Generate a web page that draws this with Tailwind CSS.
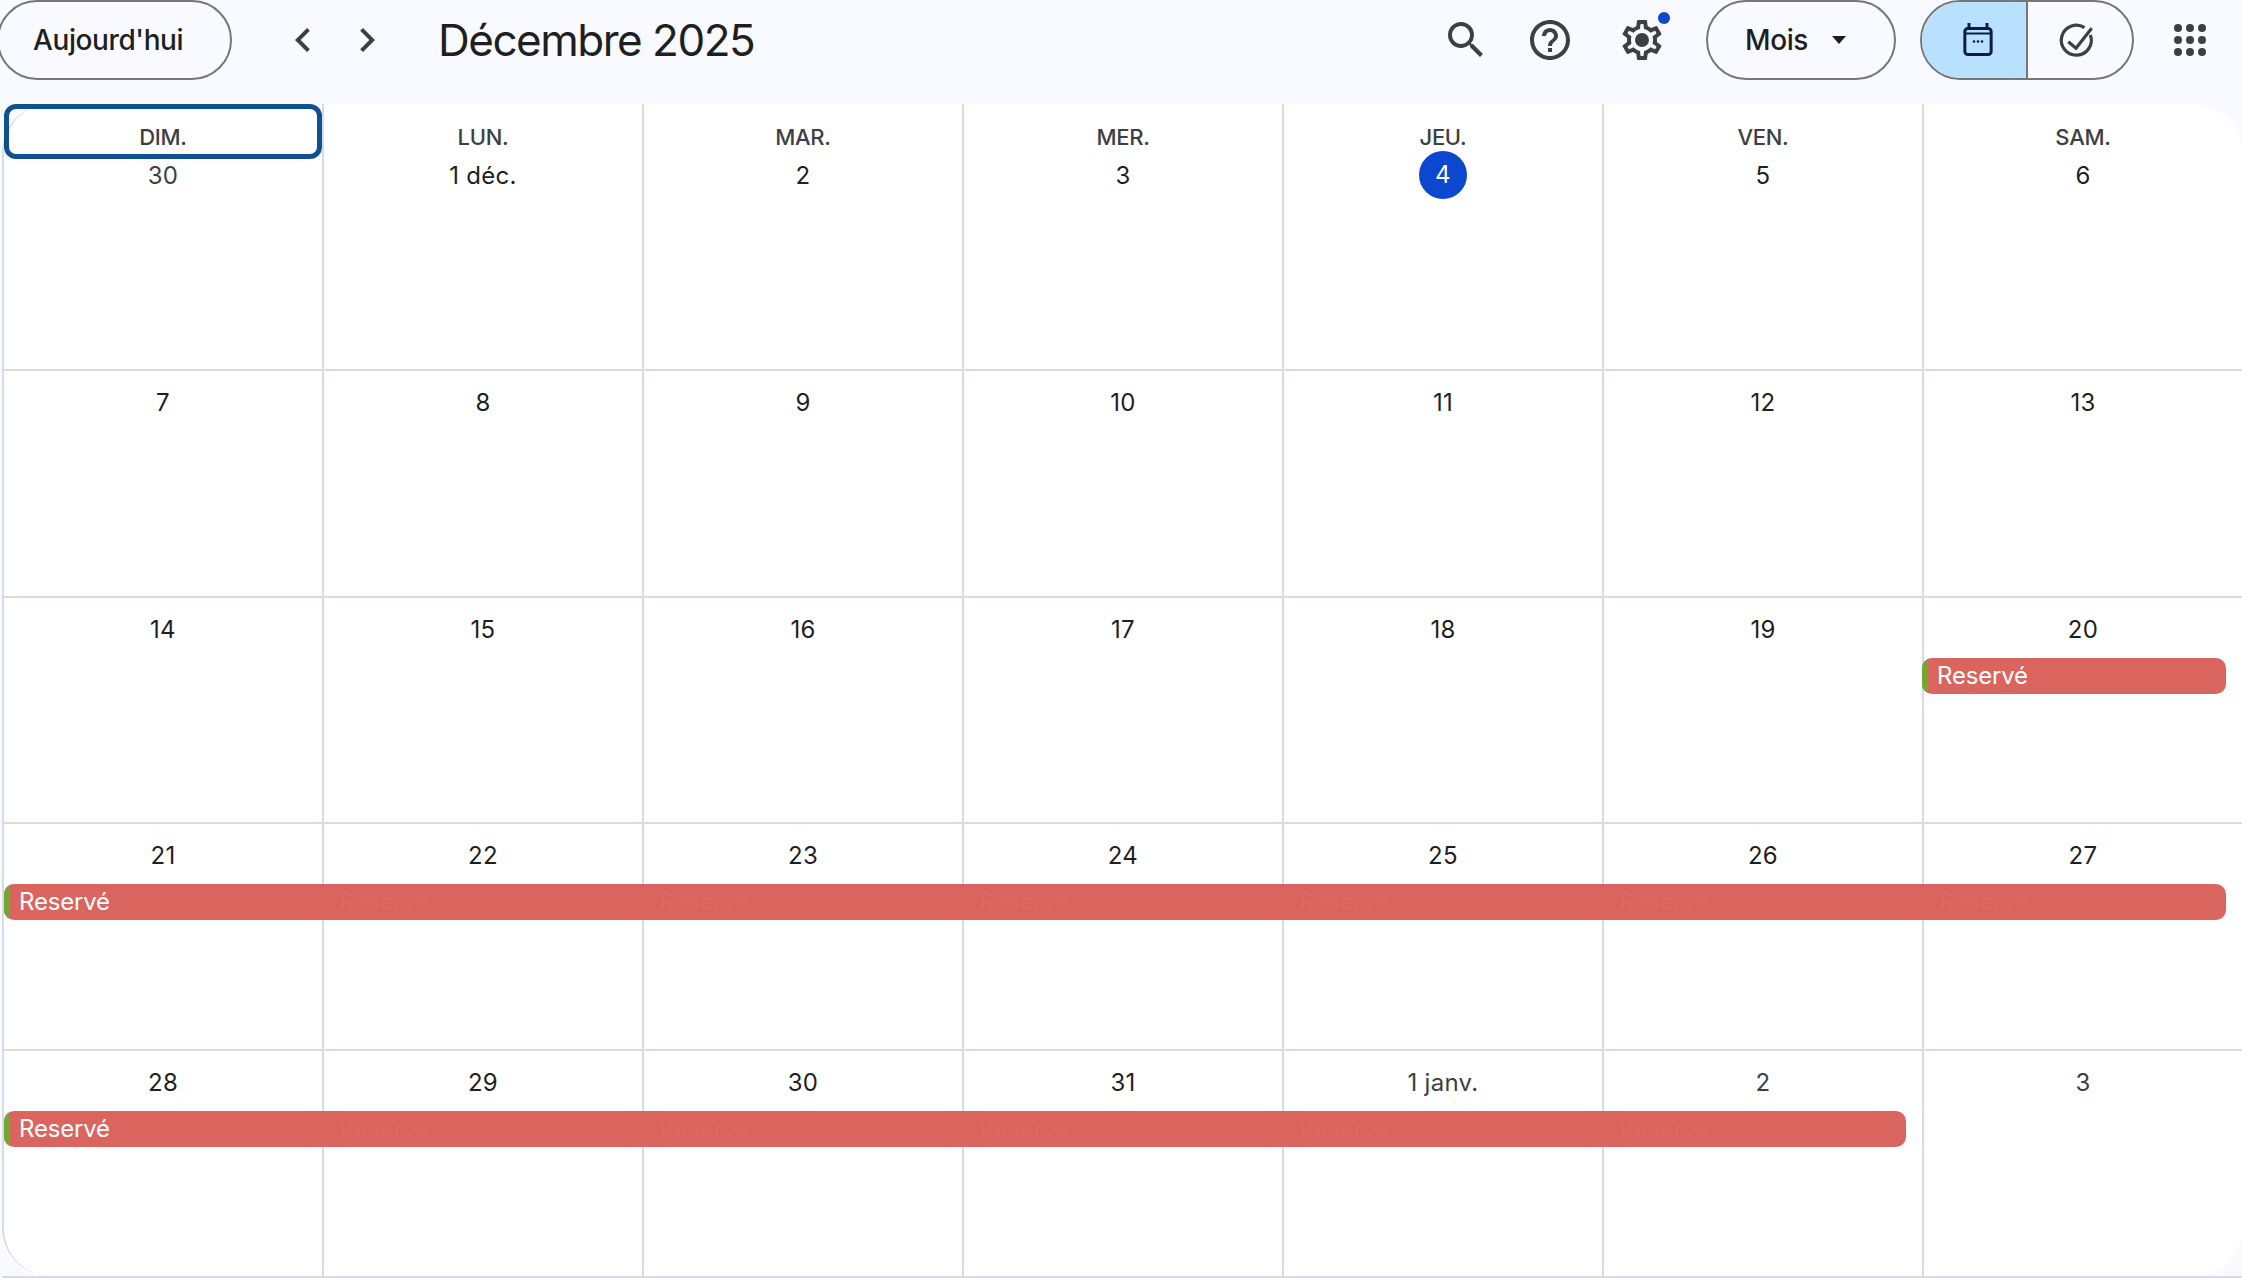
<!doctype html>
<html lang="fr">

<head>
    <meta charset="UTF-8">
    <title>Décembre 2025</title>
    <script src="https://cdn.jsdelivr.net/npm/@tailwindcss/browser@4"></script>
</head>

<body class="w-[2242px] h-[1278px] overflow-hidden bg-[#f8faff] font-['Inter',sans-serif] text-[#1f1f1f]">
    <!-- top bar -->
    <header class="h-[104px] flex items-start">
        <button class="w-[235px] h-20 -ml-[3px] pl-[34px] text-left rounded-full border-2 border-[#747775] text-[28px] font-medium tracking-[-0.4px] text-[#1f1f1f]">Aujourd'hui</button>
        <div class="flex ml-[39px] h-20 items-center text-[#3c4043]">
            <div class="w-16 flex justify-center">
                <svg width="48" height="48" viewBox="0 0 24 24" fill="currentColor"><path d="M15.41 7.41 14 6l-6 6 6 6 1.41-1.41L10.83 12z"/></svg>
            </div>
            <div class="w-16 flex justify-center">
                <svg width="48" height="48" viewBox="0 0 24 24" fill="currentColor"><path d="M10 6 8.59 7.41 13.17 12l-4.58 4.59L10 18l6-6z"/></svg>
            </div>
        </div>
        <h1 class="ml-[39px] h-20 leading-20 text-[44px] font-normal tracking-[-1.5px]">Décembre 2025</h1>

        <div class="ml-auto flex items-center h-20 text-[#3c4043]">
            <svg width="48" height="48" viewBox="0 0 24 24" fill="currentColor"><path d="M15.5 14h-.79l-.28-.27A6.471 6.471 0 0 0 16 9.5 6.5 6.5 0 1 0 9.5 16c1.61 0 3.09-.59 4.23-1.57l.27.28v.79l5 4.99L20.49 19l-4.99-5zm-6 0C7.01 14 5 11.99 5 9.5S7.01 5 9.5 5 14 7.01 14 9.5 11.99 14 9.5 14z"/></svg>
            <svg class="ml-[36px]" width="48" height="48" viewBox="0 0 24 24" fill="currentColor"><path d="M11 18h2v-2h-2v2zm1-16C6.48 2 2 6.48 2 12s4.48 10 10 10 10-4.48 10-10S17.52 2 12 2zm0 18c-4.41 0-8-3.59-8-8s3.59-8 8-8 8 3.59 8 8-3.59 8-8 8zm0-14c-2.21 0-4 1.79-4 4h2c0-1.1.9-2 2-2s2 .9 2 2c0 2-3 1.75-3 5h2c0-2.25 3-2.5 3-5 0-2.21-1.79-4-4-4z"/></svg>
            <div class="relative ml-[44px] w-12 h-12">
                <svg width="48" height="48" viewBox="0 0 24 24" fill="currentColor"><path d="M19.43 12.98c.04-.32.07-.64.07-.98 0-.34-.03-.66-.07-.98l2.11-1.65c.19-.15.24-.42.12-.64l-2-3.46c-.09-.16-.26-.25-.44-.25-.06 0-.12.01-.17.03l-2.49 1c-.52-.4-1.08-.73-1.69-.98l-.38-2.65C14.46 2.18 14.25 2 14 2h-4c-.25 0-.46.18-.49.42l-.38 2.65c-.61.25-1.17.59-1.69.98l-2.49-1c-.06-.02-.12-.03-.18-.03-.17 0-.34.09-.43.25l-2 3.46c-.13.22-.07.49.12.64l2.11 1.65c-.04.32-.07.65-.07.98 0 .33.03.66.07.98l-2.11 1.65c-.19.15-.24.42-.12.64l2 3.46c.09.16.26.25.44.25.06 0 .12-.01.17-.03l2.49-1c.52.4 1.08.73 1.69.98l.38 2.65c.03.24.24.42.49.42h4c.25 0 .46-.18.49-.42l.38-2.65c.61-.25 1.17-.59 1.69-.98l2.49 1c.06.02.12.03.18.03.17 0 .34-.09.43-.25l2-3.46c.12-.22.07-.49-.12-.64l-2.11-1.65zm-1.98-1.71c.04.31.05.52.05.73 0 .21-.02.43-.05.73l-.14 1.13.89.7 1.08.84-.7 1.21-1.27-.51-1.04-.42-.9.68c-.43.32-.84.56-1.25.73l-1.06.43-.16 1.13-.2 1.35h-1.4l-.19-1.35-.16-1.13-1.06-.43c-.43-.18-.83-.41-1.23-.71l-.91-.7-1.06.43-1.27.51-.7-1.21 1.08-.84.89-.7-.14-1.13c-.03-.31-.05-.54-.05-.74s.02-.43.05-.73l.14-1.13-.89-.7-1.08-.84.7-1.21 1.27.51 1.04.42.9-.68c.43-.32.84-.56 1.25-.73l1.06-.43.16-1.13.2-1.35h1.39l.19 1.35.16 1.13 1.06.43c.43.18.83.41 1.23.71l.91.7 1.06-.43 1.27-.51.7 1.21-1.07.85-.89.7.14 1.13z"/><circle cx="12" cy="12" r="3.5"/></svg>
                <span class="absolute top-[-4px] right-[-4px] w-3 h-3 rounded-full bg-[#0b47cf]"></span>
            </div>
            <button class="ml-[40px] w-[190px] h-20 rounded-full border-2 border-[#747775] flex items-center pl-[37px] text-[28px] font-medium tracking-[-0.4px] text-[#1f1f1f]">
                Mois
                <span class="ml-[24px] w-0 h-0 border-x-[7px] border-x-transparent border-t-[8px] border-t-[#1f1f1f]"></span>
            </button>
            <div class="ml-[24px] w-[214px] h-20 rounded-full border-2 border-[#747775] flex overflow-hidden">
                <div class="w-[104px] pl-[7px] bg-[#b9e1ff] flex items-center justify-center text-[#041e49]">
                    <svg width="34" height="38" viewBox="0 0 34 38" fill="none" stroke="currentColor" stroke-width="3">
                        <rect x="3.85" y="7.5" width="26.3" height="26" rx="3"/>
                        <path d="M3.85 12.5H30.15" stroke-width="2"/>
                        <path d="M8 2V7M26 2V7"/>
                        <circle cx="13" cy="20.5" r="1.3" fill="currentColor" stroke="none"/>
                        <circle cx="17" cy="20.5" r="1.3" fill="currentColor" stroke="none"/>
                        <circle cx="21" cy="20.5" r="1.3" fill="currentColor" stroke="none"/>
                    </svg>
                </div>
                <div class="flex-1 pr-2 border-l-2 border-[#747775] flex items-center justify-center">
                    <svg width="38" height="38" viewBox="0 0 38 38" fill="none" stroke="#3c4043" stroke-width="3.2">
                        <path d="M33.4 14A15 15 0 1 1 27.5 6.6"/>
                        <path d="M11.3 20.7L19 27.3L34.7 7.3"/>
                    </svg>
                </div>
            </div>
            <div class="ml-[32px] mr-[28px] w-12 h-12 grid grid-cols-3 place-items-center p-[6px]">
                <span class="w-2 h-2 rounded-full bg-[#3c4043]"></span><span class="w-2 h-2 rounded-full bg-[#3c4043]"></span><span class="w-2 h-2 rounded-full bg-[#3c4043]"></span>
                <span class="w-2 h-2 rounded-full bg-[#3c4043]"></span><span class="w-2 h-2 rounded-full bg-[#3c4043]"></span><span class="w-2 h-2 rounded-full bg-[#3c4043]"></span>
                <span class="w-2 h-2 rounded-full bg-[#3c4043]"></span><span class="w-2 h-2 rounded-full bg-[#3c4043]"></span><span class="w-2 h-2 rounded-full bg-[#3c4043]"></span>
            </div>
        </div>
    </header>

    <!-- month grid -->
    <main class="ml-[2px] h-[1174px] bg-white rounded-[48px] text-[24px] tracking-[0.3px] flex flex-col">

        <!-- week 1 with the weekday names -->
        <div class="relative h-[267px] grid grid-cols-[repeat(6,320px)_1fr] border-b-2 border-[#d5dbe8]">
            <div class="relative border-l-2 border-[#d5dbe8] rounded-tl-[48px] text-center pt-[21px]">
                <div class="absolute top-0 left-0 w-[318px] h-[55px] rounded-[12px] border-[5px] border-[#0f5190]"></div>
                <div class="h-6 leading-6 text-[22px] font-medium tracking-[-0.3px] text-[#3c4043]">DIM.</div>
                <div class="mt-[10px] h-8 leading-[34px] text-[#3c4043]">30</div>
            </div>
            <div class="border-l-2 border-[#d5dbe8] text-center pt-[21px]">
                <div class="h-6 leading-6 text-[22px] font-medium tracking-[-0.3px] text-[#3c4043]">LUN.</div>
                <div class="mt-[10px] h-8 leading-[34px]">1 déc.</div>
            </div>
            <div class="border-l-2 border-[#d5dbe8] text-center pt-[21px]">
                <div class="h-6 leading-6 text-[22px] font-medium tracking-[-0.3px] text-[#3c4043]">MAR.</div>
                <div class="mt-[10px] h-8 leading-[34px]">2</div>
            </div>
            <div class="border-l-2 border-[#d5dbe8] text-center pt-[21px]">
                <div class="h-6 leading-6 text-[22px] font-medium tracking-[-0.3px] text-[#3c4043]">MER.</div>
                <div class="mt-[10px] h-8 leading-[34px]">3</div>
            </div>
            <div class="border-l-2 border-[#d5dbe8] text-center pt-[21px]">
                <div class="h-6 leading-6 text-[22px] font-medium tracking-[-0.3px] text-[#3c4043]">JEU.</div>
                <div class="mt-[10px] h-8 flex items-center justify-center">
                    <span class="shrink-0 w-12 h-12 rounded-full bg-[#0b47cf] text-white flex items-center justify-center">4</span>
                </div>
            </div>
            <div class="border-l-2 border-[#d5dbe8] text-center pt-[21px]">
                <div class="h-6 leading-6 text-[22px] font-medium tracking-[-0.3px] text-[#3c4043]">VEN.</div>
                <div class="mt-[10px] h-8 leading-[34px]">5</div>
            </div>
            <div class="border-l-2 border-[#d5dbe8] text-center pt-[21px]">
                <div class="h-6 leading-6 text-[22px] font-medium tracking-[-0.3px] text-[#3c4043]">SAM.</div>
                <div class="mt-[10px] h-8 leading-[34px]">6</div>
            </div>
        </div>

        <!-- week 2 -->
        <div class="relative h-[227px] grid grid-cols-[repeat(6,320px)_1fr] border-b-2 border-[#d5dbe8] text-center leading-8">
            <div class="border-l-2 border-[#d5dbe8] pt-4">7</div>
            <div class="border-l-2 border-[#d5dbe8] pt-4">8</div>
            <div class="border-l-2 border-[#d5dbe8] pt-4">9</div>
            <div class="border-l-2 border-[#d5dbe8] pt-4">10</div>
            <div class="border-l-2 border-[#d5dbe8] pt-4">11</div>
            <div class="border-l-2 border-[#d5dbe8] pt-4">12</div>
            <div class="border-l-2 border-[#d5dbe8] pt-4">13</div>
        </div>

        <!-- week 3 -->
        <div class="relative h-[226px] grid grid-cols-[repeat(6,320px)_1fr] border-b-2 border-[#d5dbe8] text-center leading-8">
            <div class="border-l-2 border-[#d5dbe8] pt-4">14</div>
            <div class="border-l-2 border-[#d5dbe8] pt-4">15</div>
            <div class="border-l-2 border-[#d5dbe8] pt-4">16</div>
            <div class="border-l-2 border-[#d5dbe8] pt-4">17</div>
            <div class="border-l-2 border-[#d5dbe8] pt-4">18</div>
            <div class="border-l-2 border-[#d5dbe8] pt-4">19</div>
            <div class="border-l-2 border-[#d5dbe8] pt-4">20</div>
            <div class="absolute top-[60px] left-[1920px] w-[304px] h-9 pl-[15px] rounded-[10px] overflow-hidden bg-[#da655f] text-left text-white leading-9 tracking-[-0.2px]">
                <span class="absolute inset-y-0 left-0 w-[6px] bg-[#6faa2e]"></span>Reservé
            </div>
        </div>

        <!-- week 4 -->
        <div class="relative h-[227px] grid grid-cols-[repeat(6,320px)_1fr] border-b-2 border-[#d5dbe8] text-center leading-8">
            <div class="border-l-2 border-[#d5dbe8] pt-4">21</div>
            <div class="border-l-2 border-[#d5dbe8] pt-4">22</div>
            <div class="border-l-2 border-[#d5dbe8] pt-4">23</div>
            <div class="border-l-2 border-[#d5dbe8] pt-4">24</div>
            <div class="border-l-2 border-[#d5dbe8] pt-4">25</div>
            <div class="border-l-2 border-[#d5dbe8] pt-4">26</div>
            <div class="border-l-2 border-[#d5dbe8] pt-4">27</div>
            <div class="absolute top-[60px] left-[2px] w-[2222px] h-9 rounded-[10px] overflow-hidden bg-[#da655f] grid grid-cols-[repeat(7,320px)] text-left text-[#dc6a64] leading-9 tracking-[-0.2px]">
                <span class="absolute inset-y-0 left-0 w-[6px] bg-[#6faa2e]"></span>
                <span class="pl-[15px] text-white">Reservé</span>
                <span class="pl-[15px]">Reservé</span>
                <span class="pl-[15px]">Reservé</span>
                <span class="pl-[15px]">Reservé</span>
                <span class="pl-[15px]">Reservé</span>
                <span class="pl-[15px]">Reservé</span>
                <span class="pl-[15px]">Reservé</span>
            </div>
        </div>

        <!-- week 5 -->
        <div class="relative h-[227px] grid grid-cols-[repeat(6,320px)_1fr] border-b-2 border-[#d5dbe8] text-center leading-8">
            <div class="border-l-2 border-[#d5dbe8] rounded-bl-[48px] pt-4">28</div>
            <div class="border-l-2 border-[#d5dbe8] pt-4">29</div>
            <div class="border-l-2 border-[#d5dbe8] pt-4">30</div>
            <div class="border-l-2 border-[#d5dbe8] pt-4">31</div>
            <div class="border-l-2 border-[#d5dbe8] pt-4 text-[#3c4043]">1 janv.</div>
            <div class="border-l-2 border-[#d5dbe8] pt-4 text-[#3c4043]">2</div>
            <div class="border-l-2 border-[#d5dbe8] pt-4 text-[#3c4043]">3</div>
            <div class="absolute top-[60px] left-[2px] w-[1902px] h-9 rounded-[10px] overflow-hidden bg-[#da655f] grid grid-cols-[repeat(6,320px)] text-left text-[#dc6a64] leading-9 tracking-[-0.2px]">
                <span class="absolute inset-y-0 left-0 w-[6px] bg-[#6faa2e]"></span>
                <span class="pl-[15px] text-white">Reservé</span>
                <span class="pl-[15px]">Reservé</span>
                <span class="pl-[15px]">Reservé</span>
                <span class="pl-[15px]">Reservé</span>
                <span class="pl-[15px]">Reservé</span>
                <span class="pl-[15px]">Reservé</span>
            </div>
        </div>
    </main>
</body>

</html>
